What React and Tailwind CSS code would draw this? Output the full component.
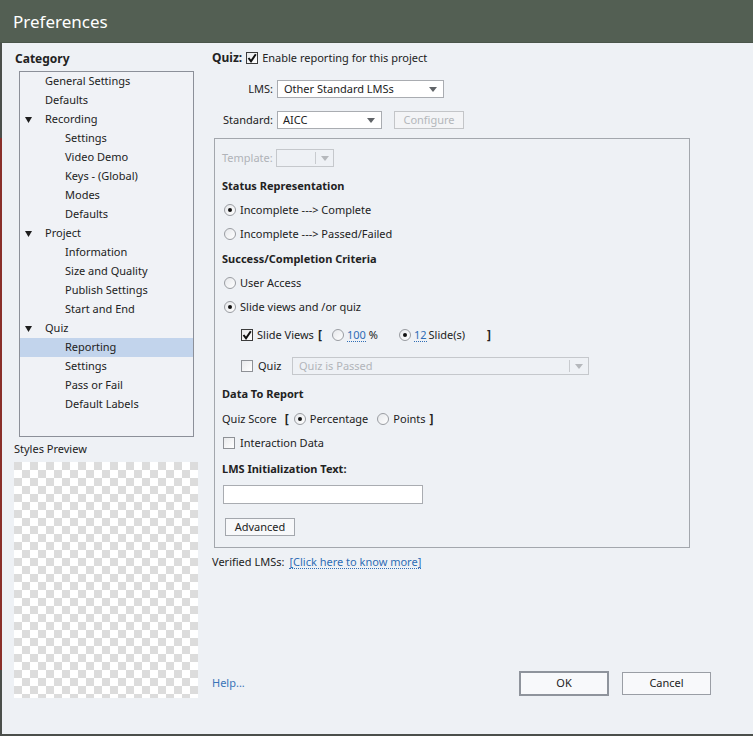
import React from 'react';

const tree = [
  { label: 'General Settings', level: 1 },
  { label: 'Defaults', level: 1 },
  { label: 'Recording', level: 1, open: true },
  { label: 'Settings', level: 2 },
  { label: 'Video Demo', level: 2 },
  { label: 'Keys - (Global)', level: 2 },
  { label: 'Modes', level: 2 },
  { label: 'Defaults', level: 2 },
  { label: 'Project', level: 1, open: true },
  { label: 'Information', level: 2 },
  { label: 'Size and Quality', level: 2 },
  { label: 'Publish Settings', level: 2 },
  { label: 'Start and End', level: 2 },
  { label: 'Quiz', level: 1, open: true },
  { label: 'Reporting', level: 2, selected: true },
  { label: 'Settings', level: 2 },
  { label: 'Pass or Fail', level: 2 },
  { label: 'Default Labels', level: 2 },
];

function Arrow({ disabled }) {
  return (
    <svg width="8" height="5" viewBox="0 0 8 5" className="shrink-0">
      <path d="M0 0 L8 0 L4 5 Z" fill={disabled ? '#b5b8bc' : '#606468'} />
    </svg>
  );
}

function Checkbox({ checked }) {
  return (
    <span className={`w-[12px] h-[12px] shrink-0 border flex items-center justify-center bg-gradient-to-br from-[#e9eaec] to-white ${checked ? 'border-[#3c3c3c]' : 'border-[#8e9196]'}`}>
      {checked && (
        <svg width="10" height="10" viewBox="0 0 10 10">
          <path d="M1.5 5 L4 8.2 L8.8 1.2" stroke="#111" strokeWidth="2" fill="none" />
        </svg>
      )}
    </span>
  );
}

function Radio({ checked }) {
  return (
    <span className="w-[12px] h-[12px] shrink-0 rounded-full border border-[#9a9da2] bg-gradient-to-br from-[#e6e8eb] to-white flex items-center justify-center">
      {checked && <span className="w-[4px] h-[4px] rounded-full bg-[#111]" />}
    </span>
  );
}

function Row({ children, className = '' }) {
  return <div className={`h-[18px] flex items-center ${className}`}>{children}</div>;
}

export default function App() {
  return (
    <div className="w-[753px] h-[736px] flex flex-col bg-[#eef1f5] text-[#222] font-['Noto_Sans',sans-serif] text-[11px] overflow-hidden">
      <div className="h-[43px] shrink-0 bg-[#535f53] border-b border-[#4a554a] flex items-center pl-[13px]">
        <span className="text-white text-[17px] leading-none">Preferences</span>
      </div>

      <div className="flex-1 flex border-b-2 border-[#4b4f4b]">
        <div className="w-[2px] shrink-0 bg-[linear-gradient(to_bottom,#4b4f4b_0px,#4b4f4b_95px,#8a2f2a_95px,#8a2f2a_627px,#4b4f4b_627px)]" />

        {/* left column */}
        <div className="w-[210px] shrink-0 pt-[6px] pl-[12px] flex flex-col">
          <div className="h-[20px] flex items-center pl-[1px] font-bold text-[12px]">Category</div>
          <div className="mt-[2px] ml-[5px] w-[175px] h-[366px] border border-[#8c9099] bg-[#f0f2f6]">
            {tree.map((item, i) => (
              <div
                key={i}
                className={`h-[19px] flex items-center ${item.selected ? 'bg-[#c2d4ec]' : ''} ${item.level === 1 ? 'pl-[25px]' : 'pl-[45px]'} relative`}
              >
                {item.open && (
                  <svg width="7" height="6" viewBox="0 0 7 6" className="absolute left-[5px] top-[7px]">
                    <path d="M0 0 L7 0 L3.5 6 Z" fill="#1e1e1e" />
                  </svg>
                )}
                <span>{item.label}</span>
              </div>
            ))}
          </div>
          <div className="mt-[3px] h-[19px] flex items-center">Styles Preview</div>
          <div className="mt-[3px] w-[184px] h-[236px] bg-[repeating-conic-gradient(#ffffff_0%_25%,#dcdcdc_0%_50%)] bg-[length:16px_16px]" />
        </div>

        {/* right column */}
        <div className="w-[499px] shrink-0 pt-[6px] flex flex-col">
          <Row>
            <span className="font-bold text-[12px] mr-[4px]">Quiz:</span>
            <Checkbox checked />
            <span className="ml-[4px]">Enable reporting for this project</span>
          </Row>

          <Row className="mt-[13px]">
            <span className="w-[65px] text-right pr-[4px]">LMS:</span>
            <div className="w-[167px] h-[18px] bg-white border border-[#a9acb1] flex items-center justify-between pl-[6px] pr-[6px]">
              <span>Other Standard LMSs</span>
              <Arrow />
            </div>
          </Row>

          <Row className="mt-[13px]">
            <span className="w-[65px] text-right pr-[4px]">Standard:</span>
            <div className="w-[105px] h-[18px] bg-white border border-[#a9acb1] flex items-center justify-between pl-[5px] pr-[6px]">
              <span>AICC</span>
              <Arrow />
            </div>
            <div className="ml-[12px] w-[70px] h-[18px] border border-[#c3c5c8] bg-[#f3f4f6] flex items-center justify-center text-[#b4b7bb]">
              Configure
            </div>
          </Row>

          <div className="mt-[9px] ml-[2px] w-[476px] h-[410px] border border-[#a3a7ad] pl-[7px] pt-[10px] flex flex-col">
            <Row>
              <span className="text-[#b0b3b8] w-[54px]">Template:</span>
              <div className="w-[58px] h-[18px] border border-[#c5c8cc] flex items-center justify-end pr-[4px]">
                <span className="w-[1px] h-[12px] bg-[#c8cbcf] mr-[5px]" />
                <Arrow disabled />
              </div>
            </Row>

            <Row className="mt-[10px] font-bold">Status Representation</Row>
            <Row className="mt-[6px] pl-[2px]">
              <Radio checked />
              <span className="ml-[4px]">Incomplete ---&gt; Complete</span>
            </Row>
            <Row className="mt-[6px] pl-[2px]">
              <Radio />
              <span className="ml-[4px]">Incomplete ---&gt; Passed/Failed</span>
            </Row>

            <Row className="mt-[7px] font-bold">Success/Completion Criteria</Row>
            <Row className="mt-[6px] pl-[2px]">
              <Radio />
              <span className="ml-[4px]">User Access</span>
            </Row>
            <Row className="mt-[6px] pl-[2px]">
              <Radio checked />
              <span className="ml-[4px]">Slide views and /or quiz</span>
            </Row>

            <Row className="mt-[10px] pl-[19px]">
              <Checkbox checked />
              <span className="ml-[4px]">Slide Views</span>
              <span className="ml-[4px] font-bold text-[12px]">[</span>
              <span className="ml-[10px]"><Radio /></span>
              <span className="ml-[3px] text-[#2f6db5] border-b border-dotted border-[#2f6db5] leading-[13px]">100</span>
              <span className="ml-[3px]">%</span>
              <span className="ml-[21px]"><Radio checked /></span>
              <span className="ml-[3px] text-[#2f6db5] border-b border-dotted border-[#2f6db5] leading-[13px]">12</span>
              <span className="ml-[2px]">Slide(s)</span>
              <span className="ml-[22px] font-bold text-[12px]">]</span>
            </Row>

            <Row className="mt-[13px] pl-[19px]">
              <Checkbox />
              <span className="ml-[5px] w-[34px]">Quiz</span>
              <div className="w-[297px] h-[18px] border border-[#c5c8cc] flex items-center justify-between pl-[6px] pr-[5px] text-[#b2b5ba]">
                <span>Quiz is Passed</span>
                <span className="flex items-center">
                  <span className="w-[1px] h-[12px] bg-[#c8cbcf] mr-[5px]" />
                  <Arrow disabled />
                </span>
              </div>
            </Row>

            <Row className="mt-[10px] font-bold">Data To Report</Row>
            <Row className="mt-[7px]">
              <span>Quiz Score</span>
              <span className="ml-[8px] font-bold text-[12px]">[</span>
              <span className="ml-[5px]"><Radio checked /></span>
              <span className="ml-[4px]">Percentage</span>
              <span className="ml-[9px]"><Radio /></span>
              <span className="ml-[4px]">Points</span>
              <span className="ml-[4px] font-bold text-[12px]">]</span>
            </Row>
            <Row className="mt-[6px] pl-[1px]">
              <Checkbox />
              <span className="ml-[5px]">Interaction Data</span>
            </Row>

            <Row className="mt-[8px] font-bold">LMS Initialization Text:</Row>
            <div className="mt-[7px] ml-[1px] w-[200px] h-[19px] bg-white border border-[#a9acb1]" />
            <div className="mt-[14px] ml-[3px] w-[70px] h-[18px] border border-[#a3a7ad] bg-[#f7f8fa] flex items-center justify-center">
              Advanced
            </div>
          </div>

          <Row className="mt-[5px]">
            <span>Verified LMSs:</span>
            <span className="ml-[5px] text-[#2f6db5] border-b border-dotted border-[#2f6db5] leading-[13px]">[Click here to know more]</span>
          </Row>

          <div className="mt-[100px] h-[25px] flex items-center">
            <span className="text-[#3a74b8]">Help...</span>
            <div className="ml-auto flex items-center gap-[13px]">
              <div className="w-[90px] h-[25px] border-2 border-[#8f949c] bg-[#f8f9fb] flex items-center justify-center">OK</div>
              <div className="w-[89px] h-[23px] border border-[#9a9ea5] bg-[#f8f9fb] flex items-center justify-center">Cancel</div>
            </div>
          </div>
        </div>
      </div>
    </div>
  );
}
